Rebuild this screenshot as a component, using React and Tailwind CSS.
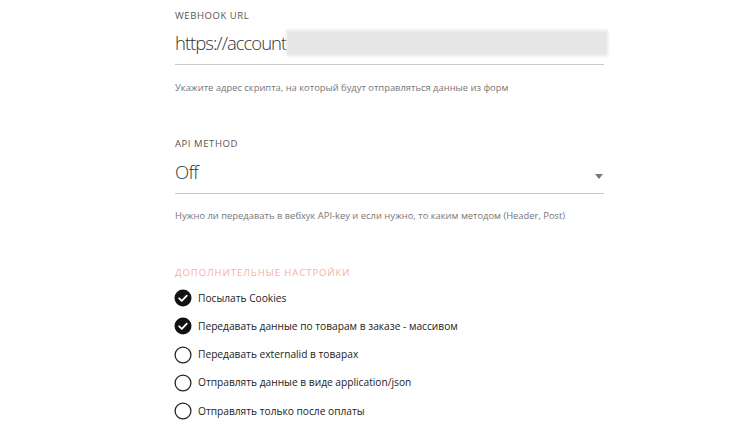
import React from "react";

const F = { fontFamily: "'Open Sans', 'Noto Sans', sans-serif" };

function Check({ checked, label }) {
  return (
    <div className="flex items-center h-[28.3px]">
      {checked ? (
        <svg width="18" height="18" viewBox="0 0 18 18" className="shrink-0">
          <circle cx="9" cy="9" r="8.5" fill="#111" />
          <path d="M5.2 9.3 L7.8 11.8 L12.8 6.6" fill="none" stroke="#fff" strokeWidth="1.8" strokeLinecap="round" strokeLinejoin="round" />
        </svg>
      ) : (
        <svg width="18" height="18" viewBox="0 0 18 18" className="shrink-0">
          <circle cx="9" cy="9" r="7.9" fill="none" stroke="#222" strokeWidth="1.3" />
        </svg>
      )}
      <span className="ml-[6px] text-[10.2px] font-medium text-[#222]">{label}</span>
    </div>
  );
}

export default function App() {
  return (
    <div className="w-[750px] h-[425px] bg-white overflow-hidden" style={F}>
      <div className="ml-[175px] w-[429px] pt-[10px]">
        <div className="text-[9.5px] tracking-[0.06em] text-[#555] leading-[12px]">WEBHOOK URL</div>
        <div className="flex items-center mt-[6px] h-[30px]">
          <span className="text-[18.5px] font-light tracking-[-1px] text-[#333] leading-[30px]">https://account</span>
          <div className="flex-1 h-[26px] bg-[#e7e7e7] blur-[1.5px] mr-[-4px]" />
        </div>
        <div className="mt-[6px] h-px bg-[#c9c9c9]" />
        <div className="mt-[17px] text-[9.4px] text-[#777] leading-[12px]">
          Укажите адрес скрипта, на который будут отправляться данные из форм
        </div>

        <div className="mt-[44px] text-[9.5px] tracking-[0.06em] text-[#555] leading-[12px]">API METHOD</div>
        <div className="flex items-center mt-[7px] h-[30px]">
          <span className="text-[18.5px] font-light tracking-[-0.7px] text-[#333] leading-[30px]">Off</span>
          <div className="flex-1" />
          <svg width="8" height="5" viewBox="0 0 8 5" className="mr-[1px] mt-[8px]">
            <path d="M0 0 L8 0 L4 5 Z" fill="#777" />
          </svg>
        </div>
        <div className="mt-[6px] h-px bg-[#c9c9c9]" />
        <div className="mt-[16px] text-[9.4px] text-[#777] leading-[12px]">
          Нужно ли передавать в вебхук API-key и если нужно, то каким методом (Header, Post)
        </div>

        <div className="mt-[45px] text-[9.5px] tracking-[0.1em] text-[#f4b0a4] leading-[12px]">ДОПОЛНИТЕЛЬНЫЕ НАСТРОЙКИ</div>
        <div className="mt-[5px] -ml-[1px]">
          <Check checked label="Посылать Cookies" />
          <Check checked label="Передавать данные по товарам в заказе - массивом" />
          <Check label="Передавать externalid в товарах" />
          <Check label="Отправлять данные в виде application/json" />
          <Check label="Отправлять только после оплаты" />
        </div>
      </div>
    </div>
  );
}
